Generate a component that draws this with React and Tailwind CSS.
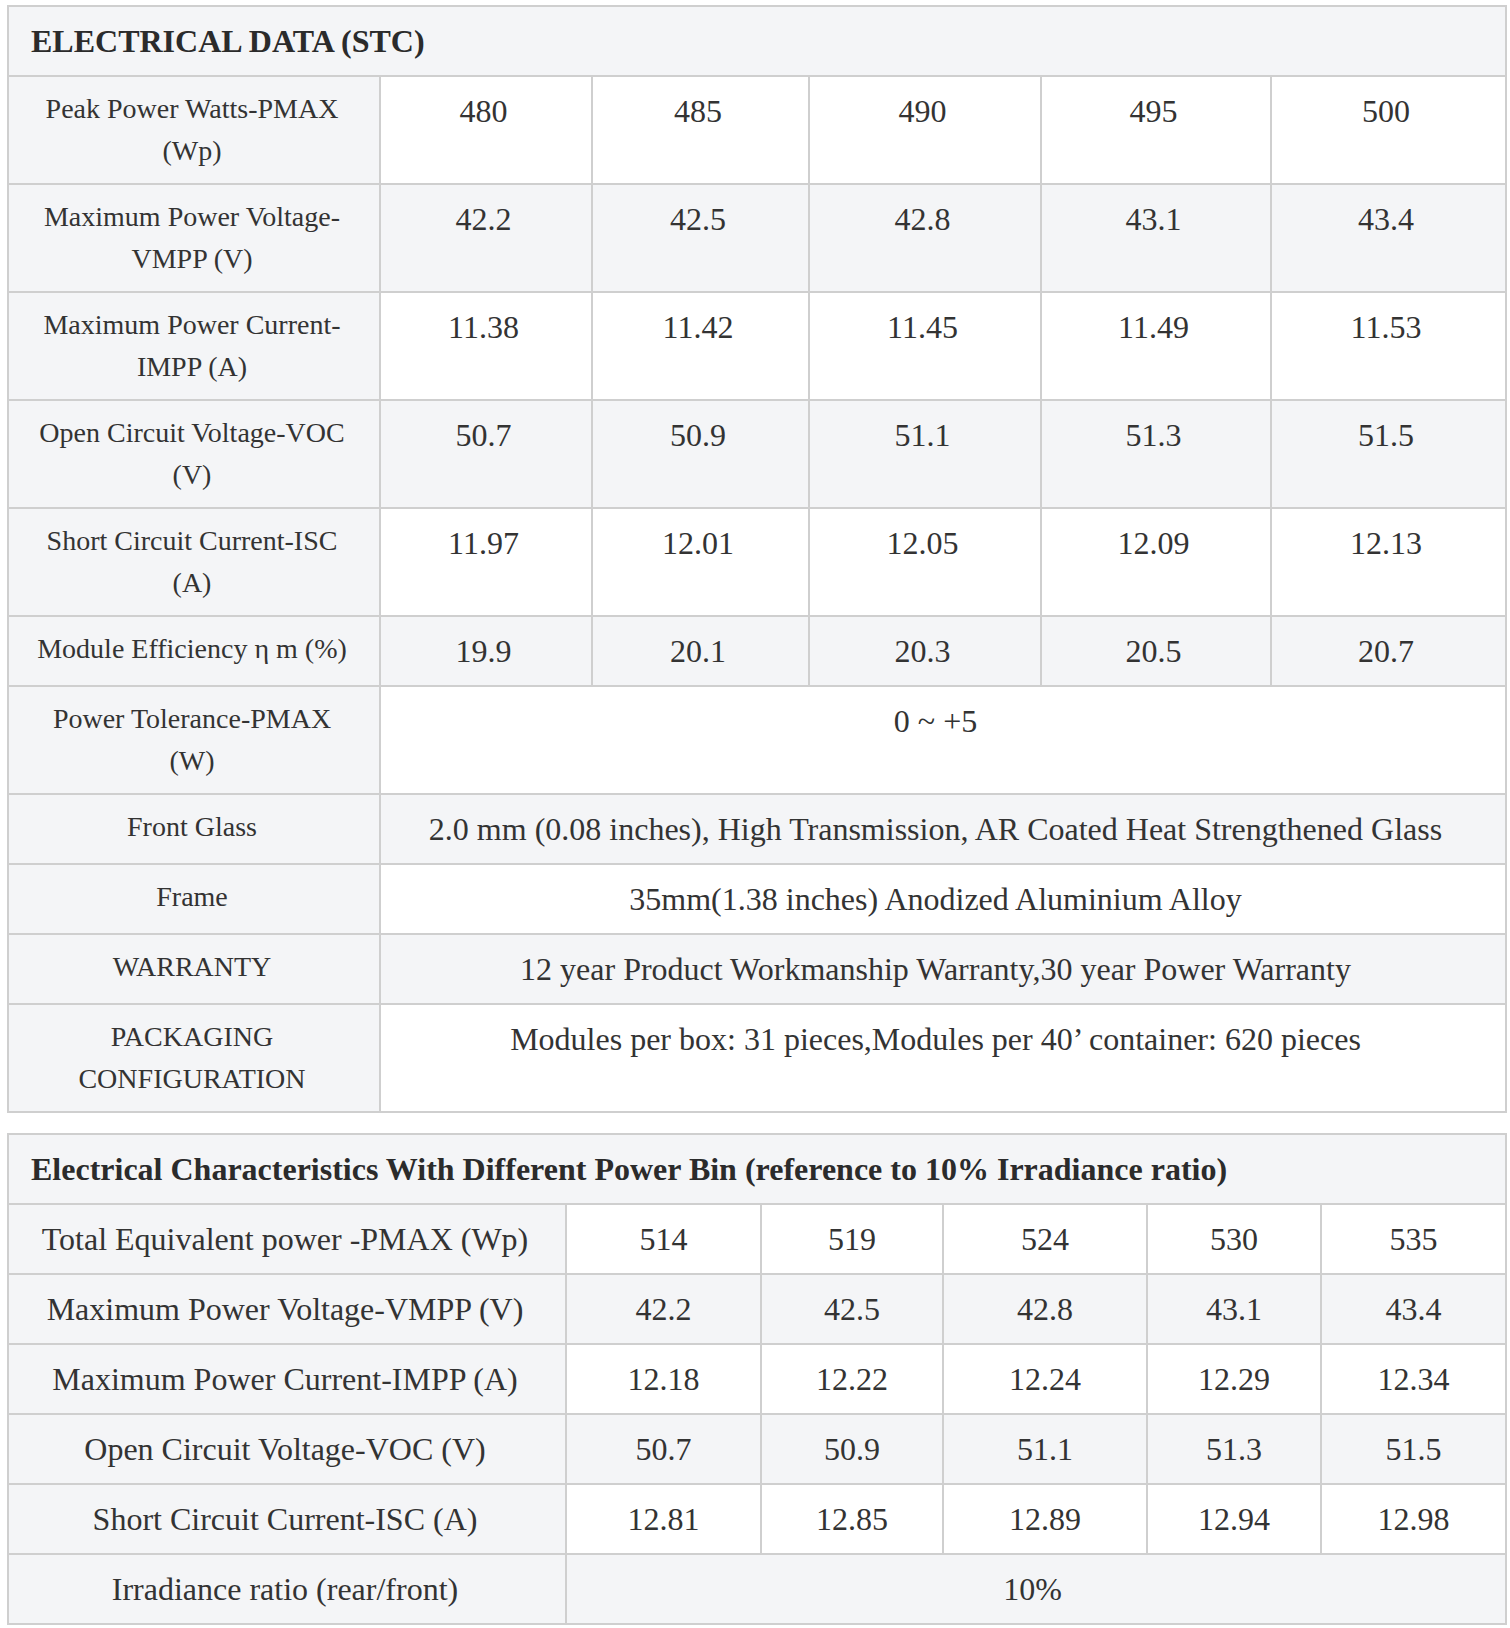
import React from 'react';
import clsx from 'clsx';

const stcRows = [
  { label: 'Peak Power Watts-PMAX (Wp)', values: ['480', '485', '490', '495', '500'] },
  { label: 'Maximum Power Voltage-VMPP (V)', values: ['42.2', '42.5', '42.8', '43.1', '43.4'] },
  { label: 'Maximum Power Current-IMPP (A)', values: ['11.38', '11.42', '11.45', '11.49', '11.53'] },
  { label: 'Open Circuit Voltage-VOC (V)', values: ['50.7', '50.9', '51.1', '51.3', '51.5'] },
  { label: 'Short Circuit Current-ISC (A)', values: ['11.97', '12.01', '12.05', '12.09', '12.13'] },
  { label: 'Module Efficiency η m (%)', values: ['19.9', '20.1', '20.3', '20.5', '20.7'] },
  { label: 'Power Tolerance-PMAX (W)', span: '0 ~ +5' },
  { label: 'Front Glass', span: '2.0 mm (0.08 inches), High Transmission, AR Coated Heat Strengthened Glass' },
  { label: 'Frame', span: '35mm(1.38 inches) Anodized Aluminium Alloy' },
  { label: 'WARRANTY', span: '12 year Product Workmanship Warranty,30 year Power Warranty' },
  { label: 'PACKAGING CONFIGURATION', span: 'Modules per box: 31 pieces,Modules per 40’ container: 620 pieces' },
];

const binRows = [
  { label: 'Total Equivalent power -PMAX (Wp)', values: ['514', '519', '524', '530', '535'] },
  { label: 'Maximum Power Voltage-VMPP (V)', values: ['42.2', '42.5', '42.8', '43.1', '43.4'] },
  { label: 'Maximum Power Current-IMPP (A)', values: ['12.18', '12.22', '12.24', '12.29', '12.34'] },
  { label: 'Open Circuit Voltage-VOC (V)', values: ['50.7', '50.9', '51.1', '51.3', '51.5'] },
  { label: 'Short Circuit Current-ISC (A)', values: ['12.81', '12.85', '12.89', '12.94', '12.98'] },
  { label: 'Irradiance ratio (rear/front)', span: '10%' },
];

const cell = 'border-2 border-[#cfcfcf] py-[11px] text-center align-top font-normal';

const DataTable = ({ title, rows, cols, labelSize, spanPad, valuePad }) => (
  <table className="w-[1500px] table-fixed border-collapse text-[#333]">
    <colgroup>
      {cols.map((w, i) => (
        <col key={i} style={{ width: w }} />
      ))}
    </colgroup>
    <tbody>
      <tr>
        <th
          colSpan={6}
          className="border-2 border-[#cfcfcf] bg-[#f4f5f7] pl-[22px] py-[11px] text-left align-top text-[32px] font-bold leading-[46px] text-[#2b2b2b]"
        >
          {title}
        </th>
      </tr>
      {rows.map((row, r) => {
        const stripe = r % 2 === 1 ? 'bg-[#f4f5f7]' : 'bg-white';
        return (
          <tr key={row.label}>
            <th className={clsx(cell, 'bg-[#f4f5f7] pl-[22px] pr-[26px]', labelSize)}>{row.label}</th>
            {row.span ? (
              <td colSpan={5} className={clsx(cell, stripe, spanPad, 'text-[32px] leading-[46px]')}>
                {row.span}
              </td>
            ) : (
              row.values.map((v, i) => (
                <td key={i} className={clsx(cell, stripe, valuePad, 'text-[32px] leading-[46px]')}>
                  {v}
                </td>
              ))
            )}
          </tr>
        );
      })}
    </tbody>
  </table>
);

export default function App() {
  return (
    <div className="min-h-screen bg-white pl-[7px] pt-[5px] pb-1 font-['Liberation_Serif','Times_New_Roman',serif]">
      <DataTable
        title="ELECTRICAL DATA (STC)"
        rows={stcRows}
        cols={[372, 212, 217, 232, 230, 235]}
        labelSize="text-[28px] leading-[42px]"
        spanPad="pl-2 pr-[23px]"
        valuePad="pl-1 pr-[9px]"
      />
      <div className="h-[20px]" />
      <DataTable
        title="Electrical Characteristics With Different Power Bin (reference to 10% Irradiance ratio)"
        rows={binRows}
        cols={[558, 195, 182, 204, 174, 185]}
        labelSize="text-[32px] leading-[46px]"
        spanPad="pl-2 pr-[15px]"
        valuePad="px-[6px]"
      />
    </div>
  );
}
